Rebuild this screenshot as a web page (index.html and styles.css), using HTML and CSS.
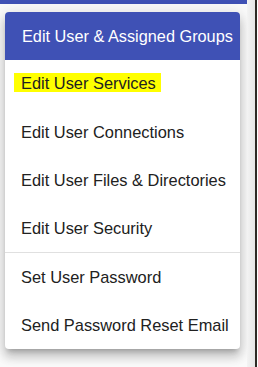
FILE: index.html
```html
<!DOCTYPE html>
<html lang="en">
<head>
    <meta charset="UTF-8">
    <meta name="viewport" content="width=device-width, initial-scale=1.0">
    <title>User Menu</title>
    <link rel="stylesheet" href="styles.css">
</head>
<body>
    <div class="page">
        <!-- Bottom edge of the app toolbar -->
        <div class="toolbar"></div>

        <!-- User actions menu -->
        <div class="menu">
            <div class="menu-header">Edit User &amp; Assigned Groups</div>
            <div class="menu-item"><span class="marker">Edit User Services</span></div>
            <div class="menu-item">Edit User Connections</div>
            <div class="menu-item">Edit User Files &amp; Directories</div>
            <div class="menu-item">Edit User Security</div>
            <div class="menu-divider"></div>
            <div class="menu-item">Set User Password</div>
            <div class="menu-item">Send Password Reset Email</div>
        </div>
    </div>

    <!-- Scrollbar and window edge -->
    <div class="scrollbar"></div>
    <div class="window-edge"></div>
</body>
</html>
```

FILE: styles.css
```css
/* Basic styling for the body */
body {
    display: flex;
    margin: 0;
    height: 367px;
    overflow: hidden;
    background-color: #ffffff;
    font-family: "Liberation Sans", Arial, sans-serif;
}

/* Page area behind the menu */
.page {
    width: 247px;
    background-color: #fafafa;
}

.toolbar {
    height: 4px;
    background-color: #3f51b5;
}

/* Menu card */
.menu {
    width: 235px;
    margin: 8px 0 0 5px;
    background-color: #ffffff;
    border-radius: 4px;
    box-shadow: 0 5px 5px -3px rgba(0, 0, 0, 0.2),
                0 8px 10px 1px rgba(0, 0, 0, 0.14),
                0 3px 14px 2px rgba(0, 0, 0, 0.12);
    overflow: hidden;
}

.menu-header {
    height: 48px;
    line-height: 48px;
    padding-left: 17px;
    background-color: #3f51b5;
    color: #ffffff;
    font-size: 16.3px;
    white-space: nowrap;
}

.menu-item {
    height: 48px;
    line-height: 48px;
    padding-left: 16px;
    color: #212121;
    font-size: 16.4px;
    white-space: nowrap;
}

.menu-divider {
    height: 1px;
    background-color: #e0e0e0;
}

/* Yellow highlighter mark */
.marker {
    display: inline-block;
    line-height: 18px;
    padding: 1px 5px 0 7px;
    margin-left: -7px;
    vertical-align: 1px;
    background-color: #ffff00;
}

/* Scrollbar strip on the right */
.scrollbar {
    width: 8px;
    background: linear-gradient(90deg, #f3f3f3, #e6e6e6);
}

.window-edge {
    width: 2px;
    background-color: #2e2a25;
}
```
